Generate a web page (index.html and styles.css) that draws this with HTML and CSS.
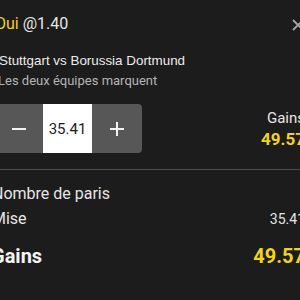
FILE: index.html
```html
<!DOCTYPE html>
<html>
<head>
<meta charset="utf-8">
<link rel="stylesheet" href="styles.css">
</head>
<body>
<div class="page">
  <div class="header">
    <div class="title"><span class="sel">Oui</span> <span class="odds">@1.40</span></div>
    <svg class="close" width="12" height="12" viewBox="0 0 12 12"><path d="M1 1L11 11M11 1L1 11" stroke="#a8a8a8" stroke-width="1.8"/></svg>
  </div>
  <div class="match">Stuttgart vs Borussia Dortmund</div>
  <div class="market">Les deux équipes marquent</div>
  <div class="stake-row">
    <div class="stepper">
      <div class="btn minus"><span class="bar"></span></div>
      <div class="input">35.41</div>
      <div class="btn plus"><span class="bar"></span><span class="bar vert"></span></div>
    </div>
    <div class="gain-box">
      <div class="gain-label">Gains</div>
      <div class="gain-val">49.57</div>
    </div>
  </div>
  <div class="divider"></div>
  <div class="summary">
    <div class="srow"><span>Nombre de paris</span></div>
    <div class="srow"><span>Mise</span><span class="sval">35.41</span></div>
    <div class="srow total"><span>Gains</span><span class="tval">49.57</span></div>
  </div>
</div>
</body>
</html>
```
FILE: styles.css
```css
html, body {
  margin: 0;
  padding: 0;
  background: #1c1c1c;
  overflow: hidden;
  width: 300px;
  height: 300px;
}
.page {
  margin-left: -6px;
  width: 311px;
  font-family: Roboto, "Noto Sans", sans-serif;
  color: #e6e6e6;
}
.header {
  display: flex;
  justify-content: space-between;
  align-items: center;
  padding-top: 13px;
  height: 22px;
}
.title {
  font-size: 16px;
  line-height: 20px;
  margin-left: 1px;
}
.sel { color: #f2d41c; }
.odds { color: #e6e6e6; }
.close { margin-right: 1px; margin-top: 2px; }
.match {
  margin-top: 17px;
  font-family: "Liberation Sans", Arial, sans-serif;
  font-size: 13.4px;
  line-height: 18px;
  color: #ececec;
  margin-left: 5px;
}
.market {
  margin-top: 2px;
  font-size: 13px;
  line-height: 18px;
  color: #b4b4b4;
  margin-left: 4px;
}
.stake-row {
  display: flex;
  justify-content: space-between;
  align-items: flex-start;
  margin-top: 14px;
}
.stepper {
  display: flex;
  height: 49px;
  width: 148px;
  border-radius: 4px;
  overflow: hidden;
  background: #575757;
}
.btn {
  width: 49px;
  position: relative;
  display: flex;
  align-items: center;
  justify-content: center;
}
.bar {
  display: block;
  width: 14px;
  height: 2px;
  background: #f2f2f2;
}
.plus .bar { position: absolute; }
.plus .vert { width: 2px; height: 14px; }
.input {
  width: 49px;
  background: #ffffff;
  color: #1c1c1c;
  font-size: 15px;
  display: flex;
  align-items: center;
  justify-content: center;
}
.gain-box {
  text-align: right;
  padding-top: 4px;
}
.gain-label {
  font-size: 15px;
  line-height: 20px;
  color: #e6e6e6;
}
.gain-val {
  font-size: 17px;
  font-weight: bold;
  line-height: 22px;
  color: #f2d41c;
}
.divider {
  height: 1px;
  background: #4e4e4e;
  margin-top: 16px;
}
.summary {
  padding-top: 11px;
}
.srow {
  display: flex;
  justify-content: space-between;
  align-items: baseline;
  font-size: 16px;
  line-height: 25px;
  margin-left: -2px;
}
.sval {
  font-size: 14px;
}
.total {
  margin-top: 12px;
  font-size: 20px;
  line-height: 24px;
  font-weight: bold;
  color: #f4f4f4;
  margin-left: -3px;
}
.tval {
  font-size: 20px;
  color: #f2d41c;
}
```
